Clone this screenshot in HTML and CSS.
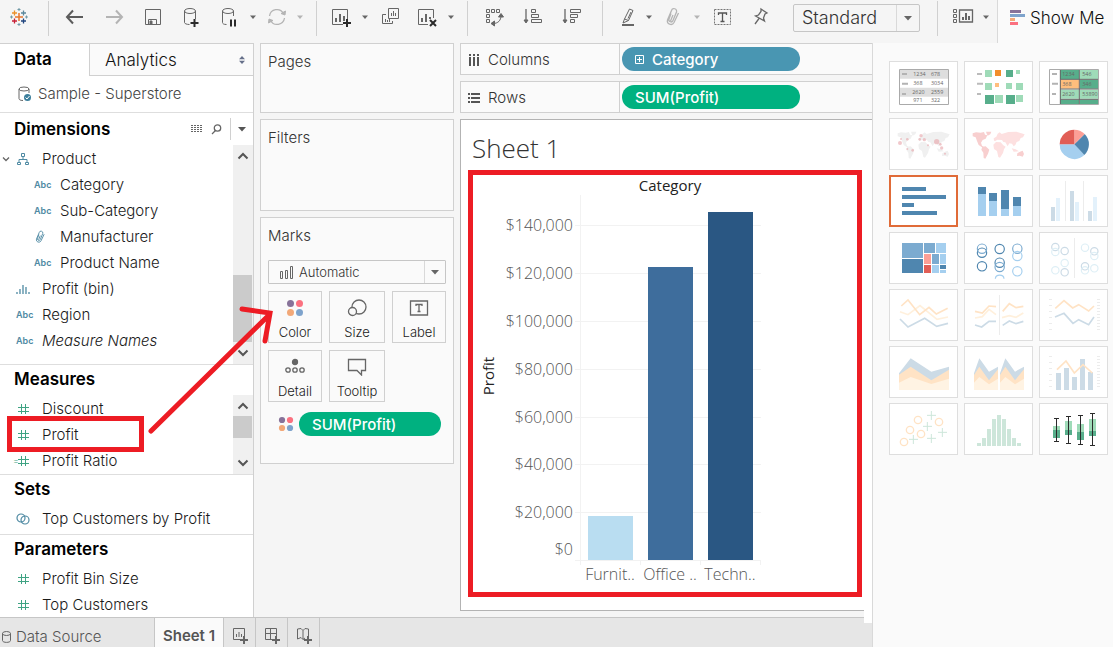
FILE: index.html
```
<!DOCTYPE html>
<html lang="en">
<head>
<meta charset="utf-8">
<title>Sheet 1 - Superstore</title>
<link rel="stylesheet" href="styles.css">
</head>
<body>
<svg class="defs" aria-hidden="true">
  <symbol id="hash" viewBox="0 0 14 14"><path d="M5.500 2v10M9.500 2v10M2 5.500h11M2 9.500h11" stroke="#3fa383" fill="none"/></symbol>
  <symbol id="clip" viewBox="0 0 20 20"><path d="M7 6.500L5 12a2 2 0 0 0 4 1.500L12.500 5a2.500 2.500 0 0 0-5-1.500L3.500 13a3.500 3.500 0 0 0 6.500 2.500L14.500 6M9 8l-2.500 6" stroke="currentColor" fill="none" stroke-width="1.300"/></symbol>
  <symbol id="caret" viewBox="0 0 10 10"><path d="M2 3.500h6L5 7z" fill="currentColor"/></symbol>
  <symbol id="bigcaret" viewBox="0 0 10 10"><path d="M1 3h8L5 7.500z" fill="currentColor"/></symbol>
  <symbol id="up" viewBox="0 0 12 12"><path d="M1.500 8.500L6 4l4.500 4.500" stroke="#555" stroke-width="2" fill="none"/></symbol>
  <symbol id="down" viewBox="0 0 12 12"><path d="M1.500 3.500L6 8l4.500-4.500" stroke="#555" stroke-width="2" fill="none"/></symbol>
  <symbol id="dots" viewBox="0 0 18 18"><circle cx="4.500" cy="4.500" r="3.500" fill="#877299"/><circle cx="13.500" cy="4.500" r="3.500" fill="#fb7180"/><circle cx="4.500" cy="13.500" r="3.500" fill="#f2a878"/><circle cx="13.500" cy="13.500" r="3.500" fill="#7ea3cc"/></symbol>
</svg>

<header class="topbar">
  <div class="toolbar">
    <button class="logo" aria-label="Start page"><svg width="18" height="18" viewBox="0 0 18 18" fill="none"><path d="M9 5v8M5 9h8" stroke="#e8762c" stroke-width="1.500"/><path d="M4.500 2.500v5M2 5h5" stroke="#eb912b" stroke-width="1.300"/><path d="M13.500 2.500v5M11 5h5" stroke="#5b879b" stroke-width="1.300"/><path d="M4.500 10.500v5M2 13h5" stroke="#c72037" stroke-width="1.300"/><path d="M13.500 10.500v5M11 13h5" stroke="#1f447e" stroke-width="1.300"/><path d="M9 0v3M7.500 1.500h3M9 15v3M7.500 16.500h3M1.500 7.500v3M0 9h3M16.500 7.500v3M15 9h3" stroke="#7199a6"/></svg></button>
    <span class="sep"></span>
    <div class="group">
      <button class="tool" aria-label="Undo"><svg class="ic" viewBox="0 0 26 26" fill="none" stroke="#5c5c5c" stroke-width="2"><path d="M21 13H5M11 6.500L5 13l6 6.500"/></svg></button>
      <button class="tool" aria-label="Redo"><svg class="ic" viewBox="0 0 26 26" fill="none" stroke="#b4b4b4" stroke-width="2"><path d="M5 13h16M15 6.500l6 6.500-6 6.500"/></svg></button>
      <button class="tool" aria-label="Save"><svg class="ic" viewBox="0 0 26 26" fill="none" stroke="#666"><path d="M5.500 5.500h15v15h-15zM8.500 20v-4.500h8V20"/><path d="M10 17h2v3h-2z" fill="#666"/></svg></button>
      <button class="tool" aria-label="New data source"><svg class="ic" viewBox="0 0 26 26" fill="none" stroke="#666"><ellipse cx="11" cy="7" rx="5.500" ry="2.500"/><path d="M5.500 7v11.500c0 1 2 2 5 2M16.500 7v8"/><path d="M11.500 19h8M15.500 15v8" stroke="#2b2b2b" stroke-width="2"/></svg></button>
      <button class="tool wide" aria-label="Pause auto updates"><svg class="ic" viewBox="0 0 26 26" fill="none" stroke="#666"><ellipse cx="11" cy="7" rx="5.500" ry="2.500"/><path d="M5.500 7v11.500c0 1 1 2 4 2M16.500 7v5"/><path d="M14 15.500v7M18 15.500v7" stroke="#2b2b2b" stroke-width="2"/></svg><svg class="car"><use href="#caret"/></svg></button>
      <button class="tool wide faded" aria-label="Refresh"><svg class="ic" viewBox="0 0 26 26" fill="none" stroke="currentColor" stroke-width="1.300"><path d="M5.500 12a7.500 7.500 0 0 1 14-2.500M20.500 14a7.500 7.500 0 0 1-14 2.500"/><path d="M17 9.500l4 1.500.5-4zM9 16.500L5 15l-.5 4z" fill="currentColor" stroke-width="1"/></svg><svg class="car"><use href="#caret"/></svg></button>
    </div>
    <span class="sep"></span>
    <div class="group">
      <button class="tool wide" aria-label="New worksheet"><svg class="ic" viewBox="0 0 26 26" fill="none" stroke="#666"><path d="M14 20.500H3.500v-15h15V15"/><path d="M7 18v-4M11 18v-8M15 17v-5" stroke-width="2"/><path d="M14 19h8M18 15v8" stroke="#2b2b2b" stroke-width="2"/></svg><svg class="car"><use href="#caret"/></svg></button>
      <button class="tool" aria-label="Duplicate sheet"><svg class="ic" viewBox="0 0 26 26" fill="none" stroke="#666"><path d="M11.500 4.500h10v10h-10zM9 10.500H5.500v9h10V17M14.500 12V9M16.500 12V7M18.500 12V9M8.500 18v-3M10.500 18v-2M12.500 18v-3"/></svg></button>
      <button class="tool wide" aria-label="Clear sheet"><svg class="ic" viewBox="0 0 26 26" fill="none" stroke="#666"><path d="M13 20.500H3.500v-15h15V14"/><path d="M7 18v-4M11 18v-8M15 15v-2" stroke-width="2"/><path d="M15 16l6 6M21 16l-6 6" stroke="#2b2b2b" stroke-width="2"/></svg><svg class="car"><use href="#caret"/></svg></button>
    </div>
    <span class="sep"></span>
    <div class="group">
      <button class="tool" aria-label="Swap rows and columns"><svg class="ic" viewBox="0 0 26 26" fill="none" stroke="#666"><path d="M5.500 5.500h3v3h-3zM10.500 5.500h3v3h-3zM15.500 5.500h3v3h-3zM5.500 10.500h3v3h-3zM5.500 15.500h3v3h-3zM12 19.500c5 0 8-3 8-8"/><path d="M17.500 13l2.500-3.500 2.500 3.500zM13.500 17L10 19.500l3.500 2.500z" fill="#666"/></svg></button>
      <button class="tool" aria-label="Sort ascending"><svg class="ic" viewBox="0 0 26 26" fill="none" stroke="#666"><path d="M6 5v13" stroke-width="1.300"/><path d="M11.500 5.500h4v3h-4zM11.500 10.500h7v3h-7zM11.500 15.500h10v3h-10z"/><path d="M4 16h4l-2 3z" fill="#666"/></svg></button>
      <button class="tool" aria-label="Sort descending"><svg class="ic" viewBox="0 0 26 26" fill="none" stroke="#666"><path d="M6 5v13" stroke-width="1.300"/><path d="M11.500 5.500h10v3h-10zM11.500 10.500h7v3h-7zM11.500 15.500h4v3h-4z"/><path d="M4 16h4l-2 3z" fill="#666"/></svg></button>
    </div>
    <span class="sep"></span>
    <div class="group">
      <button class="tool pen" aria-label="Highlight"><svg class="ic" viewBox="0 0 26 26" fill="none" stroke="#666"><path d="M14.500 5l3.500 1.500-4.500 10-4-1.500zM9.500 15l-1.500 4 5.500-2.500M16 8l-3 6.500"/><path d="M7 21h12" stroke-width="2"/></svg><svg class="car"><use href="#caret"/></svg></button>
      <button class="tool wide faded" aria-label="Group members"><svg class="ic"><use href="#clip" x="3" y="3" width="20" height="20"/></svg><svg class="car"><use href="#caret"/></svg></button>
      <button class="tool" aria-label="Show mark labels"><svg class="ic" viewBox="0 0 26 26" fill="none" stroke="#777"><path d="M5.500 5.500h16v15h-16z" stroke-dasharray="2 1"/><path d="M9.500 11V9h8v2M13.500 9v8M11.500 17.500h4" stroke="#555" stroke-width="1.300"/></svg></button>
      <button class="tool" aria-label="Fix axes"><svg class="ic" viewBox="0 0 26 26" fill="none" stroke="#666" stroke-width="1.300"><path d="M13 5l6 4-2 1-1.500 4 1 3-9-5 3-1 2.500-3.500zM11 14.500L7 20"/></svg></button>
    </div>
    <label class="fit"><select aria-label="Fit"><option>Standard</option></select><svg class="car"><use href="#bigcaret"/></svg></label>
    <span class="sep last"></span>
    <button class="tool wide" aria-label="Show cards"><svg class="ic" viewBox="0 0 26 26" fill="none" stroke="#666"><path d="M3.500 5.500h3v3h-3zM3.500 10.500h3v3h-3zM3.500 15.500h3v3h-3z"/><path d="M9.500 6h13v12h-13z" stroke-width="1.300"/><path d="M13 16v-3M16 16V9M19 16v-4" stroke-width="2"/></svg><svg class="car"><use href="#caret"/></svg></button>
  </div>
  <button class="showme-tab"><svg width="15" height="16" viewBox="0 0 15 16"><path d="M0 0h11v3H0z" fill="#877299"/><path d="M0 4h15v3H0z" fill="#7ea3cc"/><path d="M0 8h5v3H0z" fill="#f2a878"/><path d="M0 12h8v3H0z" fill="#fb7180"/></svg>Show Me</button>
</header>

<div class="body">
  <main class="main">
    <div class="work">
      <aside class="data">
        <div class="dtabs">
          <button class="dtab on">Data</button>
          <button class="dtab">Analytics<svg width="6" height="8" viewBox="0 0 6 8" fill="#66708a"><path d="M0 3.300h6L3 0zM0 4.700h6L3 8z"/></svg></button>
        </div>
        <div class="source"><svg width="14" height="16" viewBox="0 0 14 16" fill="none" stroke="#666"><ellipse cx="6" cy="3" rx="5" ry="2"/><path d="M1 3v9.500c0 1 1 2 4 2M11 3v4"/><circle cx="9.500" cy="11.500" r="3.500" fill="#3c7f9c" stroke="none"/><path d="M7.500 11.500l1.500 1.500 2.500-3" stroke="#fff"/></svg>Sample - Superstore</div>

        <section class="block dims">
          <div class="head"><h2>Dimensions</h2>
            <button class="mini" aria-label="View data"><svg width="12" height="8" viewBox="0 0 12 8" stroke="#666"><path d="M0 .5h12M0 2.500h12M0 4.500h12M0 6.500h12" stroke-dasharray="2 1"/></svg></button>
            <button class="mini" aria-label="Find field"><svg width="11" height="11" viewBox="0 0 11 11" fill="none" stroke="#666" stroke-width="1.300"><circle cx="6.500" cy="4" r="3.200"/><path d="M4.500 6.500L1 10"/></svg></button>
            <button class="mini menu" aria-label="Menu"><svg width="10" height="10"><use href="#bigcaret"/></svg></button>
          </div>
          <div class="scroll">
            <ul>
              <li class="root"><svg class="chev" viewBox="0 0 8 8" fill="none" stroke="#666" stroke-width="1.300"><path d="M1 2.500l3 3 3-3"/></svg><svg class="fi" viewBox="0 0 14 14" fill="none" stroke="#4f8aa3"><path d="M5.500 1.500h3v3h-3zM1.500 10.500h3v2h-3zM9.500 10.500h3v2h-3zM7 4.500v3M3 10V7.500h8V10"/></svg>Product</li>
              <li class="sub"><span class="abc">Abc</span>Category</li>
              <li class="sub"><span class="abc">Abc</span>Sub-Category</li>
              <li class="sub"><svg class="fi blue"><use href="#clip"/></svg>Manufacturer</li>
              <li class="sub"><span class="abc">Abc</span>Product Name</li>
              <li><svg class="fi" viewBox="0 0 14 14" stroke="#4f8aa3" stroke-width="1.300"><path d="M1 10v2M4 7v5M7 3v9M10 5v7M13 10v2"/></svg>Profit (bin)</li>
              <li><span class="abc">Abc</span>Region</li>
              <li><span class="abc">Abc</span><em>Measure Names</em></li>
            </ul>
            <div class="bar dimbar"><svg class="ar"><use href="#up"/></svg><i></i><svg class="ar"><use href="#down"/></svg></div>
          </div>
        </section>

        <section class="block meas">
          <div class="head"><h2>Measures</h2></div>
          <div class="scroll">
            <ul>
              <li><svg class="fi"><use href="#hash"/></svg>Discount</li>
              <li class="marked"><svg class="fi"><use href="#hash"/></svg>Profit</li>
              <li class="calc"><svg class="fi"><use href="#hash"/></svg>Profit Ratio</li>
            </ul>
            <div class="bar meabar"><svg class="ar"><use href="#up"/></svg><i></i><svg class="ar"><use href="#down"/></svg></div>
          </div>
        </section>

        <section class="block sets">
          <div class="head"><h2>Sets</h2></div>
          <ul><li><svg class="fi" viewBox="0 0 14 14" fill="none" stroke="#4f8aa3" stroke-width="1.200"><circle cx="5" cy="6" r="4"/><circle cx="9" cy="8" r="4"/></svg>Top Customers by Profit</li></ul>
        </section>

        <section class="block params">
          <div class="head"><h2>Parameters</h2></div>
          <ul>
            <li><svg class="fi"><use href="#hash"/></svg>Profit Bin Size</li>
            <li><svg class="fi"><use href="#hash"/></svg>Top Customers</li>
          </ul>
        </section>
      </aside>

      <div class="cards">
        <section class="card pages"><h3>Pages</h3></section>
        <section class="card filters"><h3>Filters</h3></section>
        <section class="card marks">
          <h3>Marks</h3>
          <label class="marktype"><svg width="14" height="13" viewBox="0 0 14 13" fill="none" stroke="#666"><path d="M.5 5.500h2v7h-2zM5.500 4.500h2v8h-2zM10.500 .5h2v12h-2z"/></svg><select aria-label="Mark type"><option>Automatic</option></select><svg class="car"><use href="#bigcaret"/></svg></label>
          <div class="mbtns">
            <button><svg width="18" height="18"><use href="#dots"/></svg>Color</button>
            <button><svg width="20" height="18" viewBox="0 0 20 18" fill="#fafafa" stroke="#666" stroke-width="1.300"><circle cx="12" cy="8" r="7"/><circle cx="5.500" cy="12.500" r="4"/></svg>Size</button>
            <button><svg width="20" height="18" viewBox="0 0 20 18" fill="none" stroke="#666" stroke-width="1.300"><path d="M1.500 2h17v14h-17zM7 7V5.500h6V7M10 5.500v7M8.500 12.500h3"/></svg>Label</button>
            <button><svg width="20" height="18" viewBox="0 0 20 18" fill="none" stroke="#666" stroke-width="1.300"><circle cx="10" cy="4" r="2.500" fill="#666"/><circle cx="3" cy="12" r="2.200"/><circle cx="10" cy="12" r="2.200"/><circle cx="17" cy="12" r="2.200"/></svg>Detail</button>
            <button><svg width="20" height="18" viewBox="0 0 20 18" fill="none" stroke="#666" stroke-width="1.300"><path d="M1.500 1.500h17v11h-4V17L10 12.500H1.500z"/></svg>Tooltip</button>
          </div>
          <div class="enc"><svg width="16" height="16"><use href="#dots"/></svg><span class="pill green">SUM(Profit)</span></div>
        </section>
      </div>

      <div class="view">
        <div class="shelf"><div class="slabel"><svg width="12" height="14" viewBox="0 0 12 14" stroke="#555" stroke-width="2"><path d="M2 1v2M6 1v2M10 1v2M2 4v9M6 4v9M10 4v9"/></svg>Columns</div><span class="pill blue-pill"><svg width="9" height="9" viewBox="0 0 9 9" fill="none" stroke="#fff"><path d="M.5.500h8v8h-8zM2 4.500h5M4.500 2v5"/></svg>Category</span></div>
        <div class="shelf"><div class="slabel"><svg width="12" height="12" viewBox="0 0 12 12" stroke="#555" stroke-width="2"><path d="M0 2h2M0 6h2M0 10h2M3 2h9M3 6h9M3 10h9"/></svg>Rows</div><span class="pill green">SUM(Profit)</span></div>
        <div class="sheet">
          <h1>Sheet 1</h1>
          <div class="viz">
            <svg class="chart" width="384" height="417" viewBox="473 175 384 417" role="img" aria-label="Profit by category">
              <path d="M580.500 195v370M640.500 560v5M700.500 560v5M760.500 560v5M575 560.500h186M575 512.500h186M575 464.500h186M575 417.500h186M575 369.500h186M575 321.500h186M575 273.500h186M575 225.500h186" stroke="#f2f2f2" fill="none"/>
              <path d="M588 516h45v44h-45z" fill="#b9ddf1"/><path d="M648 267h45v293h-45z" fill="#3e6d9c"/><path d="M708 212h45v348h-45z" fill="#2a5783"/>
              <text class="ct" x="670" y="191" text-anchor="middle">Category</text>
              <g class="ax" text-anchor="end"><text x="573" y="231">$140,000</text><text x="573" y="279">$120,000</text><text x="573" y="327">$100,000</text><text x="573" y="375">$80,000</text><text x="573" y="423">$60,000</text><text x="573" y="470">$40,000</text><text x="573" y="518">$20,000</text><text x="573" y="555">$0</text></g>
              <g class="ax" text-anchor="middle"><text x="610" y="580">Furnit..</text><text x="670" y="580">Office ..</text><text x="730" y="580">Techn..</text></g>
              <text class="ct" transform="translate(494 376) rotate(-90)" text-anchor="middle">Profit</text>
            </svg>
          </div>
        </div>
      </div>
    </div>
    <nav class="tabs">
      <button class="ds"><svg width="9" height="12" viewBox="0 0 9 12" fill="none" stroke="#666"><ellipse cx="4.500" cy="2.500" rx="4" ry="2"/><path d="M.5 2.500v7c0 2.500 8 2.500 8 0v-7"/></svg>Data Source</button>
      <button class="cur">Sheet 1</button>
      <button class="new" aria-label="New worksheet"><svg width="16" height="16" viewBox="0 0 16 16" fill="none" stroke="#666"><path d="M9 11.500H.5V.5h11V8M3.500 9V6M6 9V4M8.500 9V6"/><path d="M7 12h8M11 8v8" stroke-width="2"/></svg></button>
      <button class="new" aria-label="New dashboard"><svg width="16" height="16" viewBox="0 0 16 16" fill="none" stroke="#666"><path d="M8 11.500H.5V.5h11V8M.5 5.500h11M5.500.500v11"/><path d="M7 12h8M11 8v8" stroke-width="2"/></svg></button>
      <button class="new" aria-label="New story"><svg width="16" height="16" viewBox="0 0 16 16" fill="none" stroke="#666"><path d="M8 10l-2 1.500-2-2L.5 11V1L4 .5l2 2 2-2 3.500.5V8M6 2.500v9"/><path d="M7 12h8M11 8v8" stroke-width="2"/></svg></button>
    </nav>
  </main>

  <aside class="showme">
    <button aria-label="Text table"><svg viewBox="0 0 207 156"><path d="M32 26h146v103H32z" fill="#fff"/><path d="M32 26h146v27H32zM32 80h146v27H32z" fill="#dedede"/><path d="M39 39h15M39 68h18M39 99h12" stroke="#b3b3b3" stroke-width="6"/><path d="M31.500 25.500h147v105h-147z" fill="none" stroke="#aaa" stroke-width="3"/><g class="tiny"><text x="73" y="46">1234</text><text x="126" y="46">678</text><text x="73" y="73">368</text><text x="126" y="73">3034</text><text x="70" y="100">2620</text><text x="126" y="100">2559</text><text x="73" y="124">971</text><text x="126" y="124">322</text></g></svg></button>
    <button aria-label="Heat map"><svg viewBox="0 0 207 156"><path d="M39 39h15M39 68h18M39 99h12" stroke="#bbb" stroke-width="6"/><path d="M63 27h21v21H63zM156 27h12v12h-12zM63 66h21v21H63zM126 66h18v18h-18zM156 66h21v21h-21zM93 102h24v24H93zM156 102h21v21h-21z" fill="#9fdbb8"/><path d="M126 27h21v21h-21zM63 102h27v27H63zM126 102h27v27h-27z" fill="#57ae8b"/><path d="M93 27h18v18H93z" fill="#f28e2b"/><path d="M93 66h12v12H93z" fill="#ffbe7d"/></svg></button>
    <button aria-label="Highlight table"><svg viewBox="0 0 207 156"><path d="M63 26h57v28H63zM123 56h55v27h-55zM63 116h57v13H63z" fill="#57ae8b"/><path d="M123 26h55v28h-55zM63 86h57v27H63zM123 86h55v27h-55z" fill="#9fdbb8"/><path d="M63 56h57v27H63z" fill="#ffbe7d"/><path d="M123 116h55v13h-55z" fill="#57ae8b"/><path d="M64 25v105M121 25v105M64 55h114M64 84h114M64 115h114" stroke="#666" stroke-width="3"/><path d="M39 39h15M39 68h18M39 99h12" stroke="#b3b3b3" stroke-width="6"/><path d="M31.500 25.500h147v105h-147z" fill="none" stroke="#aaa" stroke-width="3"/><g class="tiny"><text x="70" y="46">1234</text><text x="130" y="46">546</text><text x="70" y="76">368</text><text x="130" y="76">346</text><text x="70" y="106">2620</text><text x="130" y="106">53890</text></g></svg></button>
    <button aria-label="Symbol map"><svg viewBox="0 0 207 156"><g fill="#f0f0f0"><path d="M26 46l10-3 14 1 10-2 3 8 7 2-5 10-9 4-5 8 3 9 7 5-5 1-12-8-5-12-4-11-9-3zM66 41h16l-3 8-8 4-3-6zM55 86l10-1 11 10-4 12-8 15-5-2-1-16-6-9z"/><path d="M90 68l-1-7 8-5 4-9 6-4 6 5 20-6 24-1 25 8-5 9-7 2-4 9-8 3-4 9-5 4-5-8-8-1-5 9-7-12-6-1-4-6-14-1-6 4zM88 80l8-8 14 1 8 9 7 4-5 8-3 11-9 14-5-2-4-18-9-6zM143 91l12 3 10 6-16 1zM160 106l8-5 8-3 4 10-4 8-9-3-8 1z"/></g><g fill="#e9a5aa" opacity=".6"><circle cx="33" cy="75" r="6"/><circle cx="36" cy="63" r="3"/><circle cx="55" cy="64" r="4"/><circle cx="55" cy="93" r="3"/><circle cx="71" cy="97" r="4"/><circle cx="96" cy="53" r="5"/><circle cx="92" cy="64" r="4"/><circle cx="106" cy="65" r="5"/><circle cx="117" cy="82" r="3"/><circle cx="143" cy="71" r="8"/><circle cx="154" cy="79" r="4"/><circle cx="158" cy="90" r="5"/><circle cx="168" cy="107" r="3"/></g></svg></button>
    <button aria-label="Filled map"><svg viewBox="0 0 207 156"><path fill="#f8cfcf" d="M26 46l10-3 14 1 10-2 3 8 7 2-5 10-9 4-5 8 3 9 7 5-5 1-12-8-5-12-4-11-9-3zM66 41h16l-3 8-8 4-3-6zM55 86l10-1 11 10-4 12-8 15-5-2-1-16-6-9z"/><path fill="#fde0e0" d="M90 68l-1-7 8-5 4-9 6-4 6 5 20-6 24-1 25 8-5 9-7 2-4 9-8 3-4 9-5 4-5-8-8-1-5 9-7-12-6-1-4-6-14-1-6 4zM88 80l8-8 14 1 8 9 7 4-5 8-3 11-9 14-5-2-4-18-9-6zM143 91l12 3 10 6-16 1z"/><path d="M160 106l8-5 8-3 4 10-4 8-9-3-8 1z" fill="#f8cfcf"/></svg></button>
    <button aria-label="Pie chart"><svg viewBox="0 0 207 156"><path d="M106 79h-44a44 44 0 0 0 74 32z" fill="#a5cfef"/><path d="M106 79l30 32a44 44 0 0 0 1-63z" fill="#4f86af"/><path d="M106 79l31-31a44 44 0 0 0-31-13z" fill="#fc9f96"/><path d="M106 79V35a44 44 0 0 0-44 44z" fill="#e15e56"/></svg></button>
    <button class="sel" aria-label="Horizontal bars"><svg viewBox="0 0 207 156"><path d="M39 36h72v12H39zM39 60h132v12H39zM39 84h36v12H39zM39 108h105v12H39z" fill="#4f86af"/></svg></button>
    <button aria-label="Stacked bars"><svg viewBox="0 0 207 156"><path d="M42 57h24v66H42zM75 78h24v45H75zM111 102h24v21h-24zM147 93h24v30h-24z" fill="#a5cfef"/><path d="M42 36h24v21H42zM75 54h24v24H75zM111 45h24v57h-24zM147 66h24v27h-24z" fill="#4f86af"/></svg></button>
    <button aria-label="Side-by-side bars"><svg viewBox="0 0 207 156"><path d="M79.500 18v120M133.500 18v120" stroke="#ececec" stroke-width="3"/><path d="M36 96h12v42H36zM93 48h12v90H93zM147 108h12v30h-12z" fill="#ccdbe6"/><path d="M51 69h12v69H51zM108 81h12v57h-12zM162 66h12v72h-12z" fill="#e3f1fb"/></svg></button>
    <button aria-label="Treemap"><svg viewBox="0 0 207 156"><path d="M39 33h63v45H39zM105 33h33v30h-33zM129 66h21v30h-21z" fill="#7cabd0"/><path d="M39 81h63v42H39zM153 99h18v12h-18z" fill="#4f86af"/><path d="M141 33h30v30h-30zM153 66h18v30h-18zM129 99h21v24h-21zM153 114h18v9h-18z" fill="#a5cfef"/><path d="M105 66h21v30h-21z" fill="#fc9f96"/><path d="M105 99h21v24h-21z" fill="#e15e56"/></svg></button>
    <button aria-label="Circle views"><svg viewBox="0 0 207 156" fill="none" stroke-width="3.500"><g stroke="#4f86af"><circle cx="54" cy="62" r="14"/><circle cx="54" cy="103" r="14"/><circle cx="107" cy="51" r="14"/><circle cx="107" cy="92" r="14"/></g><g stroke="#7cabd0"><circle cx="54" cy="50" r="14"/><circle cx="107" cy="105" r="14"/><circle cx="160" cy="50" r="14"/></g><g stroke="#a5cfef"><circle cx="160" cy="72" r="14"/><circle cx="160" cy="118" r="14"/><path d="M94 140c1-14 25-14 26 0"/></g></svg></button>
    <button aria-label="Side-by-side circles"><svg viewBox="0 0 207 156" fill="none" stroke-width="3.500"><path d="M106.500 18v120" stroke="#ececec" stroke-width="3"/><g stroke="#ccdbe6"><circle cx="49" cy="45" r="11"/><circle cx="77" cy="57" r="11"/><circle cx="77" cy="121" r="11"/><circle cx="166" cy="58" r="11"/><circle cx="138" cy="103" r="11"/></g><g stroke="#deeff6"><circle cx="49" cy="60" r="11"/><circle cx="49" cy="115" r="11"/><circle cx="77" cy="93" r="11"/><circle cx="138" cy="47" r="11"/><circle cx="166" cy="72" r="11"/><circle cx="138" cy="115" r="11"/><circle cx="166" cy="109" r="11"/></g></svg></button>
    <button aria-label="Continuous lines"><svg viewBox="0 0 207 156" fill="none" stroke-width="5"><path d="M33 68l24 9 36-27 51 41 33-7" stroke="#fff0dc"/><path d="M37 51l20-18 35 44 28-22 22 20 34-17" stroke="#ffe3c5"/><path d="M33 90l24 24 50-26 36 24 34-9" stroke="#ccdbe6"/></svg></button>
    <button aria-label="Discrete lines"><svg viewBox="0 0 207 156" fill="none" stroke-width="5"><path d="M106.500 18v120" stroke="#ececec" stroke-width="3"/><path d="M33 87l22-4 20-22 21 16M114 86l22-6 20 5 22-13" stroke="#fff0dc"/><path d="M33 67l22 5 20-21 21 2M116 67l20-23 20 12 22-4" stroke="#ffe3c5"/><path d="M33 108l20 6 22-17h21M116 109l20-13 20 8 22-7" stroke="#ccdbe6"/></svg></button>
    <button aria-label="Dual lines"><svg viewBox="0 0 207 156" fill="none" stroke-width="5"><path d="M30 31.500h9M30 49.500h9M30 67.500h9M30 85.500h9M30 103.500h9M30 121.500h9M174 31.500h9M174 40.500h9M174 49.500h9M174 58.500h9M174 67.500h9M174 76.500h9M174 85.500h9M174 94.500h9M174 103.500h9M174 112.500h9M174 121.500h9" stroke="#ececec" stroke-width="3"/><path d="M49 58l26-23 26 22 18-10 30 19 16-15" stroke="#ffe3c5"/><path d="M48 84l27-11 27 30 17-11 30 15 16-23" stroke="#ccdbe6"/></svg></button>
    <button aria-label="Continuous area"><svg viewBox="0 0 207 156"><path d="M30 82l35-45 62 40 53-15v70H30z" fill="#ccdbe6"/><path d="M30 86l35-24 62 41 53-32v61H30z" fill="#ffe3c5"/><path d="M30 110l35-17 62 21 53-16v34H30z" fill="#fff3e3"/></svg></button>
    <button aria-label="Discrete area"><svg viewBox="0 0 207 156"><g id="da"><path d="M30 82l16-45 29 40 27-15v70H30z" fill="#ccdbe6"/><path d="M30 87l16-25 29 41 27-33v62H30z" fill="#ffe3c5"/><path d="M30 110l16-17 29 22 27-17v34H30z" fill="#fff3e3"/></g><use href="#da" x="78"/></svg></button>
    <button aria-label="Dual combination"><svg viewBox="0 0 207 156" fill="none"><path d="M30 31.500h9M30 49.500h9M30 67.500h9M30 85.500h9M30 103.500h9M30 121.500h9M174 31.500h9M174 40.500h9M174 49.500h9M174 58.500h9M174 67.500h9M174 76.500h9M174 85.500h9M174 94.500h9M174 103.500h9M174 112.500h9M174 121.500h9" stroke="#ececec" stroke-width="3"/><path d="M51 81h15v51H51zM75 66h15v66H75zM99 93h15v39H99zM123 39h15v93h-15zM147 78h15v54h-15z" fill="#ccdbe6"/><path d="M54 71l27-26 25 36 26-25 28 25" stroke="#ffe3c5" stroke-width="5"/></svg></button>
    <button aria-label="Scatter plot"><svg viewBox="0 0 207 156" fill="none" stroke-width="4"><g stroke="#ffe3c5"><circle cx="87" cy="51" r="11"/><circle cx="150" cy="57" r="11"/><circle cx="63" cy="81" r="11"/><circle cx="96" cy="93" r="11"/><circle cx="45" cy="117" r="11"/></g><path d="M127 24v27M114 37h27M115 57v27M102 70h27M160 75v27M147 88h27M73 96v27M60 109h27M127 93v27M114 106h27" stroke="#cde6da" stroke-width="3"/></svg></button>
    <button aria-label="Histogram"><svg viewBox="0 0 207 156"><path d="M39 120h12v9H39zM54 105h12v24H54zM69 78h12v51H69zM84 48h12v81H84zM99 36h12v93H99zM114 48h12v81h-12zM129 78h12v51h-12zM144 105h12v24h-12zM159 120h12v9h-12z" fill="#cde6da"/></svg></button>
    <button aria-label="Box and whisker"><svg viewBox="0 0 207 156"><path d="M42 69h21v12H42zM78 54h21v27H78zM114 63h21v24h-21zM150 48h21v36h-21z" fill="#9fdbb8"/><path d="M42 81h21v24H42zM78 81h21v15H78zM114 87h21v24h-21zM150 84h21v15h-21z" fill="#57ae8b"/><path d="M52.500 46v69M45 46.500h15M45 115.500h15M88.500 40v81M81 40.500h15M81 121.500h15M124.500 37v87M117 37.500h15M117 124.500h15M160.500 31v96M153 31.500h15M153 127.500h15" stroke="#2b2b2b" stroke-width="3"/></svg></button>
  </aside>
</div>
<svg class="arrow" width="130" height="136" viewBox="148 303 130 136" fill="none" stroke="#ed1c24" stroke-width="5" stroke-linecap="round" aria-hidden="true"><path d="M151 431L268 316M242 309l28 4-5 28"/></svg>
</body>
</html>
```
FILE: styles.css
```
* { box-sizing: border-box; }
html, body { height: 100%; }
body { margin: 0; display: flex; flex-direction: column; position: relative; overflow: hidden; background: #f5f5f5; color: #333; font: 15px/26px Inter, "Liberation Sans", sans-serif; font-weight: 300; }
button, select { font: inherit; color: inherit; background: none; border: 0; padding: 0; margin: 0; }
h1, h2, h3, ul { margin: 0; padding: 0; font-weight: inherit; }
ul { list-style: none; }
svg { flex: none; display: block; }
.defs { position: absolute; width: 0; height: 0; }
.arrow { position: absolute; left: 148px; top: 303px; pointer-events: none; }
.car { width: 10px; height: 10px; color: #666; }

/* toolbar */
.topbar { display: flex; flex: none; height: 43px; }
.toolbar { flex: 1; display: flex; align-items: flex-start; border-right: 1px solid #d9d9d9; padding-top: 1px; }
.logo { width: 38px; height: 32px; display: flex; align-items: center; justify-content: center; margin-right: 10px; }
.sep { width: 1px; height: 35px; background: #d0d0d0; margin-right: 6px; }
.group { display: flex; margin-right: 11px; }
.tool { width: 39px; height: 32px; display: flex; align-items: center; justify-content: center; }
.tool.wide { width: 47px; justify-content: flex-start; padding-left: 6px; gap: 5px; }
.tool.pen { width: 46px; justify-content: flex-start; padding-left: 6px; gap: 3px; }
.tool.faded, .tool.faded .car { color: #b4b4b4; }
.ic { width: 26px; height: 26px; }
.fit { width: 127px; height: 28px; margin-top: 3px; margin-left: 2px; display: flex; align-items: center; border: 1px solid #c6c6c6; border-radius: 2px; font-size: 18px; }
.fit select { flex: 1; height: 26px; appearance: none; padding-left: 8px; border-right: 1px solid #d9d9d9; }
.fit .car { margin: 0 6px; }
.sep.last { margin-left: 17px; }
.showme-tab { width: 115px; background: #fafafa; display: flex; align-items: flex-start; gap: 5px; padding: 5px 0 0 12px; font-size: 17px; color: #111; white-space: nowrap; }
.showme-tab svg { margin-top: 5px; }

.body { flex: 1; display: flex; min-height: 0; }
.main { flex: 1; min-width: 0; display: flex; flex-direction: column; }
.work { flex: 1; display: flex; min-height: 0; }

/* data pane */
.data { width: 254px; background: #fff; border-right: 1px solid #d0d0d0; border-top: 1px solid #d0d0d0; color: #1a1a1a; overflow: hidden; }
.dtabs { display: flex; height: 32px; font-size: 17px; color: #111; }
.dtab { flex: 1; display: flex; align-items: center; justify-content: space-between; padding: 0 8px 0 15px; background: #fafafa; border-left: 1px solid #d0d0d0; border-bottom: 1px solid #d0d0d0; }
.dtab.on { flex: none; width: 89px; background: #fff; border: 0; font-weight: 600; padding-left: 14px; padding-bottom: 2px; color: #000; }
.source { display: flex; align-items: center; gap: 6px; height: 37px; padding-left: 18px; border-bottom: 1px solid #dedede; color: #444; }
.block { border-bottom: 1px solid #dedede; }
.head { display: flex; align-items: center; height: 30px; padding-left: 14px; padding-bottom: 2px; font-size: 17px; color: #000; }
.head h2 { flex: 1; font-size: 17px; font-weight: 600; }
.dims .head { height: 32px; padding-bottom: 0; }
.mini { margin-right: 8px; }
.mini.menu { margin: 0; width: 23px; height: 22px; border-left: 1px solid #d0d0d0; display: flex; align-items: center; justify-content: center; color: #555; }
.scroll { display: flex; }
.dims .scroll { height: 219px; }
.meas .scroll { height: 79px; }
.scroll ul { flex: 1; }
li { display: flex; align-items: center; height: 26px; padding-left: 16px; padding-top: 2px; white-space: nowrap; }
li.sub { padding-left: 34px; }
li.root { padding-left: 2px; }
.chev { width: 8px; height: 8px; margin-right: 6px; }
.fi { width: 14px; height: 14px; margin-right: 12px; }
.fi.blue { color: #4f8aa3; }
.abc { width: 26px; font-size: 9px; font-weight: 600; color: #4f8aa3; }
.marked { outline: 5px solid #ed1c24; margin-left: 12px; margin-right: 94px; padding-left: 4px; }
.calc { padding-left: 14px; }
.calc::before { content: "="; width: 2px; font-size: 9px; color: #3fa383; text-indent: -1px; }
.bar { width: 20px; background: #f0f0f0; display: flex; flex-direction: column; align-items: center; padding: 5px 1px 5px 0; }
.ar { width: 12px; height: 12px; }
.bar i { display: block; width: 19px; background: #cbcbcb; }
.dimbar i { height: 67px; margin: 113px 0 5px; }
.meabar i { height: 22px; margin: 4px 0 auto; }
.sets { padding-bottom: 3px; }
.params { border: 0; }

/* cards */
.cards { flex: none; width: 206px; padding-left: 6px; display: flex; flex-direction: column; gap: 6px; }
.card { width: 194px; background: #fafafa; border: 1px solid #d0d0d0; padding: 5px 7px; }
.card h3 { font-size: 15px; }
.pages { height: 70px; }
.filters { height: 92px; }
.marks { height: 247px; }
.marktype { display: flex; align-items: center; height: 24px; margin-top: 11px; border: 1px solid #c6c6c6; border-radius: 1px; font-size: 13px; padding-left: 11px; gap: 5px; }
.marktype select { flex: 1; height: 22px; line-height: 22px; appearance: none; border-right: 1px solid #d9d9d9; }
.marktype .car { margin-right: 5px; }
.mbtns { display: grid; grid-template-columns: 54fr 56fr 54fr; gap: 7px; margin-top: 7px; }
.mbtns button { height: 52px; border: 1px solid #d0d0d0; display: flex; flex-direction: column; align-items: center; justify-content: space-between; padding: 7px 0 1px; font-size: 13px; line-height: 18px; color: #1a1a1a; }
.enc { display: flex; align-items: center; gap: 5px; margin-top: 10px; padding-left: 10px; }
.enc .pill { width: 142px; }
.pill { display: flex; align-items: center; gap: 8px; width: 178px; height: 24px; border-radius: 12px; padding-left: 13px; padding-top: 1px; color: #fff; font-weight: 500; }
.green { background: #00b180; }
.blue-pill { background: #4996b2; }

/* view */
.view { flex: 1; min-width: 0; display: flex; flex-direction: column; gap: 6px; padding-bottom: 6px; position: relative; }
.view::after { content: ""; position: absolute; right: 0; top: 77px; bottom: -6px; width: 8px; background: #fff; }
.shelf { display: flex; align-items: center; height: 32px; background: #fafafa; border: 1px solid #d0d0d0; border-right: 0; }
.slabel { display: flex; align-items: center; gap: 8px; align-self: stretch; width: 159px; padding-left: 7px; padding-top: 2px; border-right: 1px solid #d0d0d0; margin-right: 2px; }
.sheet { flex: 1; background: #fff; border: 1px solid #b3b3b3; border-right: 0; padding: 11px 10px 0 7px; }
h1 { font: 300 26px/34px "Open Sans", "Noto Sans", sans-serif; padding-left: 4px; margin-bottom: 5px; color: #333; }
.viz { border: 5px solid #ed1c24; }
.chart { display: block; overflow: hidden; }
.chart text { font-family: "Open Sans", "Noto Sans", sans-serif; }
.ax { font-size: 16px; font-weight: 300; fill: #555; }
.ct { font-size: 15px; font-weight: 500; fill: #222; }

/* sheet tabs */
.tabs { flex: none; display: flex; height: 30px; background: #e6e6e6; border-top: 1px solid #c6c6c6; color: #555; }
.tabs button { border-right: 1px solid #c6c6c6; display: flex; align-items: center; }
.tabs .ds { width: 155px; gap: 5px; padding: 8px 0 0 2px; }
.tabs .cur { width: 69px; background: #fafafa; justify-content: center; font-weight: 600; padding-top: 6px; }
.tabs .new { width: 32px; justify-content: center; padding-top: 7px; padding-left: 2px; }

/* chart picker */
.showme { flex: none; width: 241px; background: #fafafa; border-left: 1px solid #d9d9d9; padding: 18px 5px 0 16px; display: grid; grid-template-columns: repeat(3, 1fr); gap: 5px 6px; align-content: start; }
.showme button { height: 52px; background: #fff; border: 1px solid #dedede; }
.showme svg { width: 69px; height: 52px; margin: -1px; }
.showme .sel { border: 2px solid #e06b38; }
.showme .sel svg { margin: -2px; }
.tiny { font: 16px "Open Sans", sans-serif; fill: #666; }
```
